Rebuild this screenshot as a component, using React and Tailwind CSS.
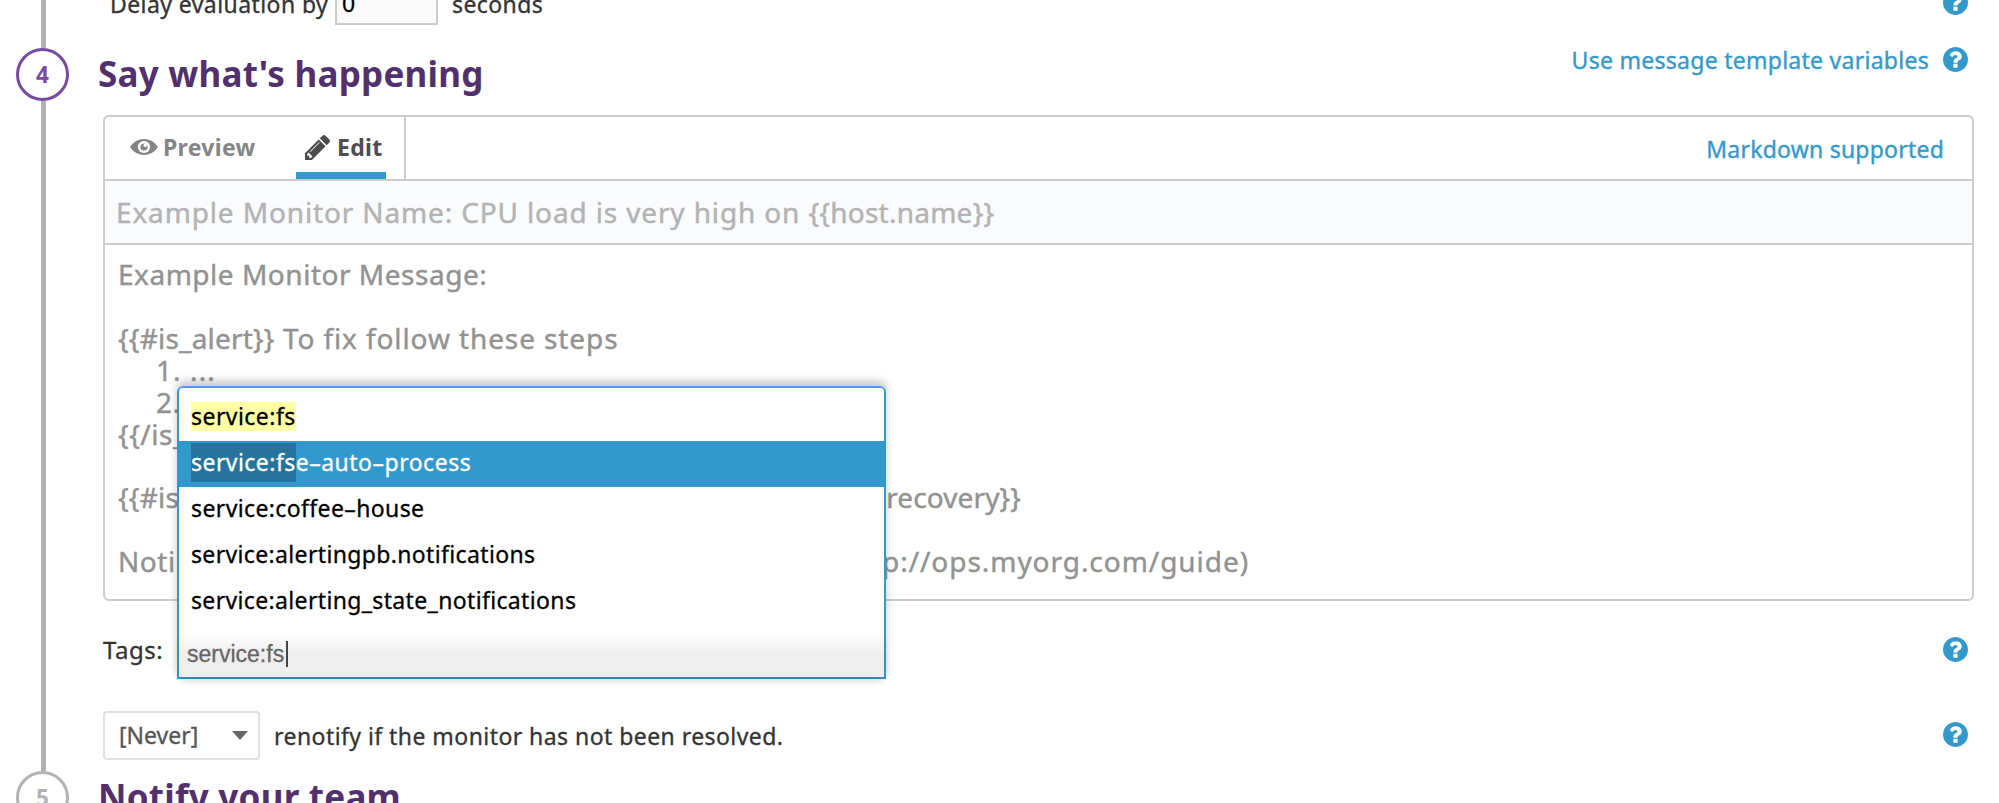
const TAGS = [
  { match: "service:fs", rest: "", track: "tracking-[0.45px]" },
  { match: "service:fs", rest: "e–auto–process", track: "tracking-[0.5px]", active: true },
  { match: "", rest: "service:coffee–house", track: "tracking-[0.38px]" },
  { match: "", rest: "service:alertingpb.notifications", track: "tracking-[0.35px]" },
  { match: "", rest: "service:alerting_state_notifications", track: "tracking-[0.35px]" },
];

function HelpIcon() {
  return (
    <svg viewBox="0 128 1536 1536" className="size-[25px] shrink-0 fill-[#3399cc]">
      <path d="M896 1376v-192q0-14-9-23t-23-9h-192q-14 0-23 9t-9 23v192q0 14 9 23t23 9h192q14 0 23-9t9-23zm256-672q0-88-55.5-163t-138.5-116-170-41q-243 0-371 213-15 24 8 42l132 100q7 6 19 6 16 0 25-12 53-68 86-92 34-24 86-24 48 0 85.5 26t37.5 59q0 38-20 61t-68 45q-63 28-115.5 86.5t-52.5 125.5v36q0 14 9 23t23 9h192q14 0 23-9t9-23q0-19 21.5-49.5t54.5-49.5q32-18 49-28.5t46-35 44.5-48 28-60.5 12.5-81zm384 192q0 209-103 385.5t-279.5 279.5-385.5 103-385.5-103-279.5-279.5-103-385.5 103-385.5 279.5-279.5 385.5-103 385.5 103 279.5 279.5 103 385.5z" />
    </svg>
  );
}

function EyeIcon() {
  return (
    <svg viewBox="0 0 28 16" className="h-4 w-7 shrink-0">
      <path d="M0 8C3.5 2.8 8.500 0 14 0s10.500 2.800 14 8c-3.500 5.200-8.500 8-14 8S3.500 13.200 0 8z" fill="#858585" />
      <circle cx="14" cy="8" r="6.100" fill="#fff" />
      <circle cx="14" cy="8" r="3.600" fill="#858585" />
      <circle cx="15.300" cy="6.300" r="1.700" fill="#fff" />
    </svg>
  );
}

function PencilIcon() {
  return (
    <svg viewBox="0 149 1515 1515" className="size-[25px] shrink-0 fill-[#4d4d4d]">
      <path d="M363 1536l91-91-235-235-91 91v107h128v128h107zm523-928q0-22-22-22-10 0-17 7l-542 542q-7 7-7 17 0 22 22 22 10 0 17-7l542-542q7-7 7-17zm-54-192l416 416-832 832h-416v-416zm683 96q0 53-37 90l-166 166-416-416 166-165q36-38 90-38 53 0 91 38l235 234q37 39 37 91z" />
    </svg>
  );
}

function StepRail() {
  return (
    <div className="flex w-[85px] shrink-0 flex-col items-center text-[22.5px] font-bold">
      <div className="h-12 w-[5px] shrink-0 translate-x-px bg-[#b2b1b6]" />
      <div className="flex size-[53px] shrink-0 items-center justify-center rounded-full border-3 border-[#774aa4] text-[#774aa4]">4</div>
      <div className="h-[670px] w-[5px] shrink-0 translate-x-px bg-[#b2b1b6]" />
      <div className="flex size-[53px] shrink-0 items-center justify-center rounded-full border-3 border-[#b2b1b6] text-[#b2b1b6]">5</div>
    </div>
  );
}

function Editor() {
  return (
    <div className="ml-[18px] mr-[25px] flex h-[486px] shrink-0 flex-col rounded-md border-2 border-[#cccccc]">
      <div className="flex h-16 shrink-0 justify-between border-b-2 border-[#cccccc]">
        <div className="flex w-[301px] justify-between border-r-2 border-[#cccccc] pl-[25px] pr-[18px] text-[23px] font-bold tracking-[0.3px]">
          <div className="flex items-center gap-[5px] pb-[3px] text-[#858585]">
            <EyeIcon />
            <span className="pt-px">Preview</span>
          </div>
          <div className="flex w-[90px] items-center gap-[7px] border-b-[7px] border-[#3399cc] pl-[9px] pt-[5px] text-[#4d4d4d]">
            <PencilIcon />
            <span>Edit</span>
          </div>
        </div>
        <span className="flex items-center pr-7 pt-[2px] text-[23px] tracking-[0.22px] text-[#3399cc] [-webkit-text-stroke:0.35px]">Markdown supported</span>
      </div>
      <div className="flex h-16 shrink-0 items-center border-b-2 border-[#cccccc] bg-[#fafbfd] pl-[11px] text-[28px] tracking-[0.86px] whitespace-pre text-[#b3b3b3] [-webkit-text-stroke:0.4px]">
        <span>Example Monitor Name: CPU load is very high on </span>
        <span className="tracking-[0.25px]">{"{{host.name}}"}</span>
      </div>
      <div className="flex flex-col pl-[13px] pt-[14px] text-[28px] leading-[31.9px] tracking-[0.52px] text-[#929292] [-webkit-text-stroke:0.4px]">
        <div>Example Monitor Message:</div>
        <div>&nbsp;</div>
        <div className="tracking-[0.9px]">
          <span className="tracking-[0.2px]">{"{{#is_alert}}"}</span> To fix follow these steps
        </div>
        <div className="pl-[38px] tracking-[1.1px]">1. ...</div>
        <div className="pl-[38px]">2. ...</div>
        <div>{"{{/is_alert}}"}</div>
        <div>&nbsp;</div>
        <div className="flex w-[903px] justify-between">
          <span className="tracking-[0.2px]">{"{{#is"}</span>
          <span className="tracking-[0.1px]">{"recovery}}"}</span>
        </div>
        <div>&nbsp;</div>
        <div className="flex w-[1131px] justify-between">
          <span>Noti</span>
          <span className="tracking-[0.95px]">p://ops.myorg.com/guide)</span>
        </div>
      </div>
    </div>
  );
}

function TagMenu() {
  return (
    <div className="absolute bottom-0 left-0 h-[293px] w-[709px] rounded-t-md shadow-[0_-5px_8px_rgba(0,0,0,0.22)]">
      <div className="flex h-full flex-col rounded-t-md border-2 border-[#3399cc] border-t-[#5897fb] bg-white text-[23px] text-black [-webkit-text-stroke:0.3px]">
        <div className="flex flex-col pt-[7px]">
          {TAGS.map((t) => (
            <div
              key={t.match + t.rest}
              className={
                t.active
                  ? "-mx-[2px] flex h-[46px] items-center bg-[#3399cc] pb-[3px] pl-[14px] text-white"
                  : "flex h-[46px] items-center pb-[3px] pl-3"
              }
            >
              {t.match && (
                <span
                  className={
                    t.active
                      ? "flex h-[39px] items-center bg-[#26749b] tracking-[0.45px]"
                      : "flex h-[29px] items-center bg-[#ffffa3] tracking-[0.45px]"
                  }
                >
                  {t.match}
                </span>
              )}
              <span className={t.track}>{t.rest}</span>
            </div>
          ))}
        </div>
        <div className="mt-auto flex h-[46px] shrink-0 items-center bg-linear-to-b from-white from-0% to-[#eeeeee] to-50% pl-2 font-['Liberation_Sans',Arial,sans-serif] text-[23px] text-[#666666] shadow-[0_6px_8px_-2px_rgba(0,0,0,0.14)]">
          service:fs
          <span className="ml-[2px] h-[26px] w-[1.5px] bg-[#444444]" />
        </div>
      </div>
    </div>
  );
}

export default function App() {
  return (
    <div className="flex h-[803px] w-[1999px] overflow-hidden bg-white font-['Noto_Sans','Noto_Sans_CJK_SC',sans-serif] text-[23px] text-[#333333]">
      <StepRail />
      <main className="flex min-w-0 flex-1 flex-col">
        <div className="-mt-[25px] flex h-[50px] shrink-0 items-center pl-[25px] pr-[31px] [-webkit-text-stroke:0.3px]">
          <span className="w-[225px] pt-2 tracking-[0.42px]">Delay evaluation by</span>
          <div className="flex h-[50px] w-[103px] items-center border-2 border-[#cccccc] bg-[#fafafa] pl-[5px] pt-[7px] text-black">0</div>
          <span className="ml-[14px] pt-2 tracking-[0.42px]">seconds</span>
          <span className="ml-auto pt-[5px]"><HelpIcon /></span>
        </div>

        <div className="flex h-[90px] shrink-0 items-start justify-between pl-[13px] pr-[31px]">
          <h2 className="mt-[25px] text-[35px] leading-[48px] font-bold tracking-[0.24px] text-[#52306e]">Say what's happening</h2>
          <div className="mt-[22px] flex h-6 items-center gap-[14px] tracking-[0.27px] text-[#3399cc]">
            <span className="pt-[3px] [-webkit-text-stroke:0.35px]">Use message template variables</span>
            <HelpIcon />
          </div>
        </div>

        <Editor />

        <div className="flex h-[97px] shrink-0 items-center pl-[18px] pr-[31px]">
          <span className="w-[74px] text-[24px] tracking-[0.5px] [-webkit-text-stroke:0.3px]">Tags:</span>
          <div className="relative h-[59px] flex-1">
            <TagMenu />
          </div>
          <HelpIcon />
        </div>

        <div className="flex h-[73px] shrink-0 items-center pl-[18px] pr-[31px]">
          <div className="mt-[2px] flex h-[49px] w-[157px] items-center justify-between rounded border-2 border-[#e0e0e2] pl-[14px] pr-[10px] text-[#555555] [-webkit-text-stroke:0.3px]">
            <span>[Never]</span>
            <svg viewBox="0 0 16 9" className="h-[9px] w-4 fill-[#666666]"><path d="M0 0h16L8 9z" /></svg>
          </div>
          <span className="ml-[14px] mt-[3px] tracking-[0.44px] [-webkit-text-stroke:0.3px]">renotify if the monitor has not been resolved.</span>
          <span className="ml-auto"><HelpIcon /></span>
        </div>

        <h2 className="shrink-0 pl-[13px] pt-[2px] text-[35px] leading-[48px] font-bold tracking-[0.24px] text-[#52306e]">Notify your team</h2>
      </main>
    </div>
  );
}
